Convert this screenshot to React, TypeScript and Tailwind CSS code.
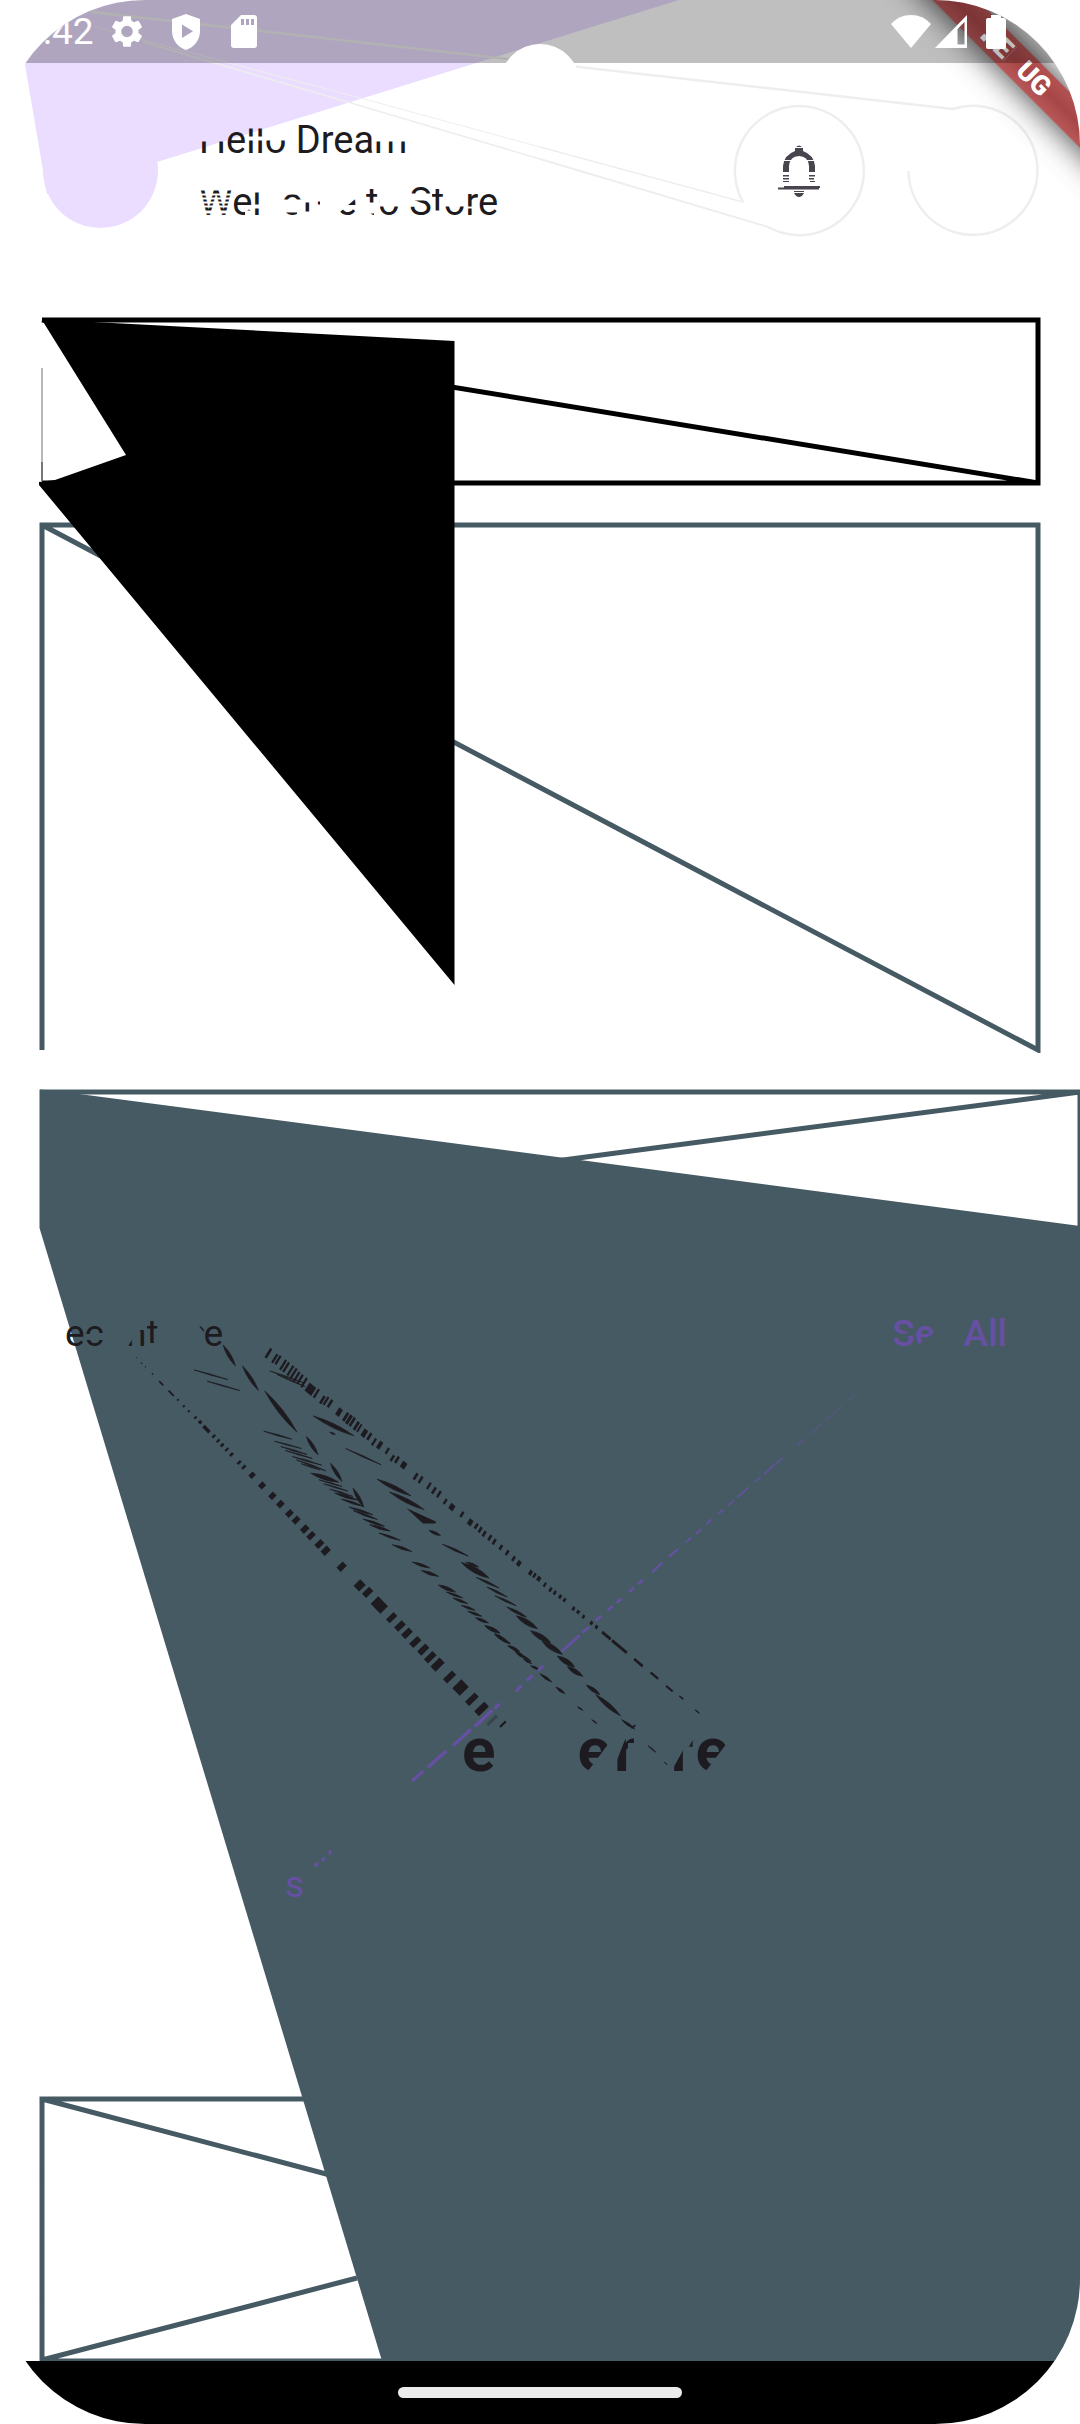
type Streak = [number, number, number, number, number];
type Tick = [number, number, number, number];

const SLATE = "#465a64";
const INK = "#1d1b20";
const VIOLET = "#6750a4";

/* centre x, centre y, length along the chain, width across it */
const lowerChain: Tick[] = [
  [350, 233, 4, 2], [365, 250, 5, 3], [377, 261, 4, 3], [398, 282, 5, 4], [424, 310, 18, 5], [454, 340, 22, 6],
  [474, 360, 5, 7], [492, 379, 6, 7], [507, 394, 6, 7], [527, 413, 6, 10], [541, 427, 10, 10], [560, 448, 26, 11],
  [582, 469, 7, 12], [595, 483, 7, 12], [607, 496, 8, 12], [621, 509, 7, 13], [635, 524, 8, 13], [658, 548, 8, 14],
  [672, 562, 8, 15], [697, 586, 14, 18], [727, 617, 16, 19], [758, 648, 16, 20], [782, 673, 17, 21], [809, 701, 16, 22],
  [829, 721, 16, 23], [855, 748, 17, 24], [874, 768, 16, 25], [899, 793, 17, 26], [918, 813, 18, 26], [966, 861, 18, 26],
  [1020, 917, 24, 28], [1044, 938, 18, 30], [1079, 976, 42, 32], [1116, 1014, 16, 32], [1141, 1039, 18, 32],
  [1162, 1061, 18, 32], [1187, 1087, 18, 34], [1211, 1110, 18, 34], [1232, 1133, 18, 36], [1254, 1155, 22, 38],
  [1290, 1192, 18, 38], [1323, 1224, 32, 38], [1357, 1259, 18, 40], [1386, 1288, 20, 42], [1450, 1334, 7, 24],
];

const upperChain: Tick[] = [
  [746, 220, 8, 32], [765, 236, 7, 30], [775, 240, 7, 30], [790, 255, 7, 34], [799, 262, 7, 34], [812, 272, 7, 34],
  [822, 280, 7, 34], [831, 290, 7, 32], [841, 298, 7, 32], [853, 308, 7, 32], [872, 328, 26, 28], [890, 341, 7, 30],
  [908, 360, 8, 26], [919, 363, 7, 28], [931, 371, 8, 26], [958, 397, 14, 24], [978, 411, 9, 28], [988, 419, 10, 30],
  [998, 426, 8, 30], [1010, 438, 9, 28], [1019, 445, 6, 26], [1034, 460, 14, 24], [1049, 470, 8, 24], [1063, 486, 7, 24],
  [1080, 496, 12, 24], [1103, 513, 7, 20], [1118, 535, 8, 20], [1132, 540, 8, 22], [1152, 556, 16, 20], [1188, 590, 8, 22],
  [1203, 600, 8, 22], [1228, 618, 7, 22], [1243, 632, 8, 22], [1258, 643, 8, 22], [1277, 665, 7, 18], [1297, 682, 16, 18],
  [1327, 704, 8, 18], [1352, 728, 14, 18], [1370, 739, 8, 18], [1382, 750, 8, 18], [1394, 762, 8, 18], [1411, 774, 8, 18],
  [1424, 786, 8, 18], [1444, 803, 8, 16], [1463, 819, 8, 16], [1482, 837, 8, 16], [1498, 851, 12, 16],
  [1533, 879, 10, 15], [1545, 887, 8, 15], [1558, 897, 12, 14], [1576, 915, 7, 14], [1593, 930, 8, 14], [1606, 939, 8, 13],
  [1622, 951, 9, 12], [1635, 961, 8, 12], [1662, 987, 8, 12], [1676, 997, 9, 11], [1692, 1011, 8, 11],
  [1716, 1030, 9, 10], [1731, 1042, 9, 10], [1761, 1068, 34, 9], [1800, 1101, 58, 9], [1857, 1149, 34, 8],
  [1905, 1188, 30, 7], [1950, 1227, 26, 6], [1986, 1254, 16, 5], [2034, 1296, 16, 4],
];

/* x1, y1, x2, y2, thickness */
const fineStreaks: Streak[] = [
  [610, 195, 647, 258, 10], [668, 258, 716, 332, 10], [735, 333, 832, 457, 14], [860, 470, 895, 525, 10],
  [932, 550, 967, 605, 10], [1000, 625, 1032, 682, 10], [540, 138, 553, 154, 4],
  [523, 270, 624, 299, 3], [562, 304, 660, 332, 3], [732, 454, 816, 478, 4], [764, 484, 845, 506, 3],
  [783, 500, 862, 524, 4], [797, 512, 878, 536, 3], [818, 530, 906, 556, 4], [830, 540, 918, 573, 4],
  [845, 552, 900, 570, 3], [873, 580, 957, 607, 12], [898, 600, 967, 620, 3], [912, 612, 985, 634, 3],
  [930, 628, 1000, 650, 4], [945, 640, 1014, 661, 8], [965, 658, 1032, 680, 6], [988, 682, 1060, 705, 6],
  [1000, 692, 1073, 719, 6], [1030, 718, 1095, 740, 7], [1050, 735, 1112, 754, 8], [1078, 760, 1142, 782, 6],
  [1118, 795, 1176, 815, 8], [1178, 847, 1231, 865, 8], [1205, 872, 1257, 890, 9], [1256, 916, 1308, 937, 10],
  [1280, 937, 1330, 955, 6], [1300, 955, 1345, 972, 7], [1325, 977, 1367, 992, 7], [1345, 995, 1387, 1010, 7],
  [1368, 1014, 1407, 1030, 8], [1396, 1038, 1440, 1060, 8], [1425, 1062, 1455, 1078, 6], [1440, 1076, 1472, 1092, 6],
  [1465, 1098, 1500, 1115, 6], [1483, 1112, 1510, 1127, 6], [1503, 1125, 1535, 1145, 6],
  [750, 273, 850, 308, 3], [772, 284, 856, 320, 3], [880, 408, 1003, 468, 12], [930, 457, 947, 464, 5],
  [978, 506, 1085, 555, 4], [1072, 598, 1174, 648, 12], [1110, 637, 1214, 690, 12], [1228, 752, 1263, 767, 8],
  [1268, 793, 1346, 829, 6], [1340, 847, 1378, 862, 7], [1325, 848, 1409, 895, 16], [1370, 893, 1439, 925, 6],
  [1402, 922, 1463, 952, 6], [1426, 948, 1490, 978, 6],
];

const farStreaks: Streak[] = [
  [208, 738, 245, 760, 10], [232, 764, 270, 792, 8], [265, 798, 292, 814, 7], [285, 820, 308, 835, 7],
  [302, 837, 323, 852, 6], [320, 858, 342, 870, 6], [343, 882, 372, 907, 7], [382, 922, 404, 942, 7],
  [435, 981, 448, 992, 4], [470, 1020, 483, 1032, 3], [262, 682, 310, 712, 8], [285, 708, 337, 747, 14],
  [320, 753, 370, 790, 14], [348, 784, 398, 824, 14], [386, 829, 428, 862, 14], [410, 860, 448, 890, 12],
  [457, 916, 490, 945, 10], [480, 945, 540, 1008, 12], [543, 1020, 575, 1048, 7], [568, 1046, 577, 1036, 5],
  [608, 1098, 627, 1118, 3], [648, 1148, 655, 1155, 1],
];

const violetDashes: Streak[] = [
  [1158, 0, 1130, 27, 1], [1113, 45, 1100, 60, 2], [1083, 78, 1043, 123, 2], [1035, 130, 1002, 165, 2],
  [990, 178, 975, 194, 3], [938, 233, 922, 251, 3], [920, 252, 893, 283, 4], [884, 291, 870, 306, 4],
  [854, 322, 828, 352, 4], [817, 362, 805, 377, 4], [792, 389, 780, 403, 5], [764, 418, 751, 434, 5],
  [738, 448, 725, 462, 5], [714, 473, 702, 487, 5], [682, 508, 659, 531, 6], [642, 549, 618, 577, 6],
  [595, 600, 584, 613, 7], [573, 623, 562, 637, 7], [543, 656, 531, 669, 7], [521, 679, 509, 692, 7],
  [494, 708, 480, 722, 7], [463, 742, 447, 759, 7], [440, 767, 396, 815, 7], [351, 858, 339, 873, 8],
  [325, 886, 311, 903, 8], [298, 917, 285, 935, 8], [244, 972, 232, 987, 9], [226, 992, 183, 1041, 9],
  [174, 1049, 130, 1098, 9], [113, 1114, 68, 1164, 9], [57, 1174, 30, 1204, 9],
];

function Ticks({ items, angle, skew }: { items: Tick[]; angle: number; skew: number }) {
  return (
    <g fill={INK}>
      {items.map(([x, y, l, w], i) => (
        <rect key={i} x={-l / 2} y={-w / 2} width={l} height={w} transform={`translate(${x} ${y}) rotate(${angle}) skewX(${skew})`} />
      ))}
    </g>
  );
}

function Lenses({ items }: { items: Streak[] }) {
  return (
    <g fill={INK} stroke={INK} strokeWidth="2">
      {items.map(([x1, y1, x2, y2, t], i) => {
        const len = Math.hypot(x2 - x1, y2 - y1);
        const nx = (-(y2 - y1) / len) * t;
        const ny = ((x2 - x1) / len) * t;
        const mx = (x1 + x2) / 2;
        const my = (y1 + y2) / 2;
        return <path key={i} d={`M${x1} ${y1}Q${mx + nx} ${my + ny} ${x2} ${y2}Q${mx - nx} ${my - ny} ${x1} ${y1}Z`} />;
      })}
    </g>
  );
}

function TextClips() {
  return (
    <svg className="absolute size-0" aria-hidden="true">
      <defs>
        <clipPath id="clip-hello">
          <path d="M0 23H28V45H0ZM28 0H48V45H28ZM48 10H67V18H48ZM48 22H88V45H48ZM88 0H175V45H88ZM175 23H220V45H175Z" />
        </clipPath>
        <clipPath id="clip-welcome">
          <path d="M0 10H34V13H0ZM0 15H34V17H0ZM0 19H34V21H0ZM0 23H34V25H0ZM0 27H34V30H0ZM0 33H34V36H0ZM34 0H54V30H34ZM34 30H46V40H34ZM54 12H63V24H54ZM54 28H63V40H54ZM84 14H104V19H84ZM84 32H98V40H84ZM106 22H111V31H106ZM118 21H121V24H118ZM158 17L138 34V40H158ZM167 8H181V22H167ZM167 33H175V40H167ZM181 26H202V40H181ZM210 5H233V13H210ZM210 20H233V40H210ZM233 8H246V30H233ZM246 26H267V40H246ZM267 10H280V26H267ZM267 28H280V40H267ZM280 10H308V40H280Z" />
        </clipPath>
        <clipPath id="clip-ec">
          <path d="M0 0H20V42H0ZM20 10H41V21H20ZM20 27H41V42H20Z" />
        </clipPath>
        <clipPath id="clip-nt">
          <path d="M0 36L8 24V42H0ZM12 17H21V42H12ZM21 0H35V30H21Z" />
        </clipPath>
        <clipPath id="clip-see">
          <path d="M0 0H23V19L0 22ZM0 26L23 22V42H0ZM23 0H43V19L29 29L24 37H23ZM64 0H124V42H64Z" />
        </clipPath>
        <clipPath id="clip-big-e">
          <path d="M0 10H30V30L9 58L0 52Z" />
        </clipPath>
        <clipPath id="clip-big-r1">
          <path d="M0 72V52L3 45L13 20H20V28H14V72Z" />
        </clipPath>
        <clipPath id="clip-big-r2">
          <path d="M2 54L13 34V72H2ZM18 32L24 22V33H18Z" />
        </clipPath>
        <clipPath id="clip-debug">
          <path d="M0 19H7V32H0ZM18 0H34V32H18ZM51 0H100V32H51Z" />
        </clipPath>
      </defs>
    </svg>
  );
}

function StatusBar() {
  return (
    <div className="relative flex h-[63px] items-center justify-between bg-black/25 pr-[74px] pl-[43px] text-white">
      <div className="flex items-center">
        <span className="w-[50px] text-[37px] leading-[42px] whitespace-nowrap">:42</span>
        <svg className="ml-[18px] h-[33px] w-8" viewBox="2 2 20 20" fill="currentColor" aria-label="Settings">
          <path d="M19.14 12.94c.04-.3.06-.61.06-.94 0-.32-.02-.64-.07-.94l2.03-1.58a.49.49 0 0 0 .12-.61l-1.92-3.32a.49.49 0 0 0-.59-.22l-2.39.96c-.5-.38-1.03-.7-1.62-.94L14.4 2.81a.48.48 0 0 0-.48-.41h-3.84a.47.47 0 0 0-.47.41L9.25 5.35c-.59.24-1.13.57-1.62.94l-2.39-.96a.48.48 0 0 0-.59.22L2.74 8.87a.47.47 0 0 0 .12.61l2.03 1.58c-.05.3-.09.63-.09.94s.02.64.07.94l-2.03 1.58a.49.49 0 0 0-.12.61l1.92 3.32c.12.22.37.29.59.22l2.39-.96c.5.38 1.03.7 1.62.94l.36 2.54c.05.24.24.41.48.41h3.84c.24 0 .44-.17.47-.41l.36-2.54c.59-.24 1.13-.56 1.62-.94l2.39.96c.22.08.47 0 .59-.22l1.92-3.32a.47.47 0 0 0-.12-.61zM12 15.6a3.6 3.6 0 1 1 0-7.2 3.6 3.6 0 0 1 0 7.2z" />
        </svg>
        <svg className="ml-7 h-9 w-[30px]" viewBox="0 0 30 36" aria-label="Protected">
          <path fill="currentColor" fillRule="evenodd" d="M15 0L29 5V17C29 26 23 33.500 15 36C7 33.500 1 26 1 17V5ZM11 10.500V24L22 17.200Z" />
        </svg>
        <svg className="ml-[30px] h-[33px] w-[26px]" viewBox="0 0 26 33" aria-label="Storage card">
          <path fill="currentColor" fillRule="evenodd" d="M10 0H23Q26 0 26 3V30Q26 33 23 33H3Q0 33 0 30V10ZM10 4V10H13V4ZM15 4V10H18V4ZM20 4V10H23V4Z" />
        </svg>
      </div>
      <div className="flex items-center">
        <svg className="h-[33px] w-10" viewBox="0 0 40 33" fill="currentColor" aria-label="Wi-Fi">
          <path d="M0 9Q8 0 20 0T40 9L20 33Z" />
        </svg>
        <svg className="ml-1 h-[33px] w-8" viewBox="0 0 32 33" aria-label="Signal">
          <path fill="currentColor" fillRule="evenodd" d="M32 0V33H0ZM29.500 7L22.500 14V29.500H29.500Z" />
        </svg>
        <svg className="ml-[19px] h-[34px] w-5" viewBox="0 0 20 34" fill="currentColor" aria-label="Battery">
          <path d="M5 0H15V3H18Q20 3 20 5V32Q20 34 18 34H2Q0 34 0 32V5Q0 3 2 3H5Z" />
        </svg>
      </div>
    </div>
  );
}

function HeaderBackdrop() {
  return (
    <svg className="absolute inset-x-0 top-0 h-[240px] w-full" viewBox="0 0 1080 240" preserveAspectRatio="none" aria-hidden="true">
      <g fill="#eaddff">
        <path d="M14 0H679L157 162L100 180L47 194Z" />
        <circle cx="100.500" cy="170.500" r="57.500" />
      </g>
      <g fill="none" stroke="#eeeeee">
        <path strokeWidth="2.500" d="M91 12L953 109A64.500 64.500 0 1 1 908.500 171" />
        <path strokeWidth="2.500" d="M743 202A64.500 64.500 0 1 1 768 227" />
        <path strokeWidth="1" d="M95 27L364 99L540 147" />
        <path strokeWidth="1.500" d="M540 147L743 202" />
        <path strokeWidth="1.500" d="M143 42L351 103L540 159" />
        <path strokeWidth="2" d="M540 159L768 227" />
      </g>
    </svg>
  );
}

function DebugRibbon() {
  return (
    <div className="absolute top-0 right-0 size-[220px] overflow-hidden">
      <div className="absolute top-[45px] left-[6px] flex h-8 w-[300px] rotate-45 items-center justify-center bg-linear-to-b from-[#b45252] via-[#a64646] to-[#b85858] text-[27px] leading-8 font-black text-white shadow-[0_0_32px_rgba(0,0,0,0.8)]">
        <span className="[clip-path:url(#clip-debug)]">DEBUG</span>
      </div>
    </div>
  );
}

function BellIcon() {
  return (
    <svg className="h-[52px] w-[42px]" viewBox="0 0 42 52" fill="#49454f" aria-hidden="true">
      <path d="M18 2Q21 -1 24 2H18ZM17 3H25V6Q36 10 37 21V27H31V21Q30 11 21 11T11 21V27H5V21Q6 10 17 6Z" />
      <path d="M5 30H11V31.500H5ZM31 30H37V31.500H31ZM5 33H11V34.500H5ZM31 33H36V34.500H31ZM5 36H11V37H5ZM32 36H37V37H32ZM6 41H42V43H41V44.500H0V42.500H6ZM16 46H26V47H16ZM16 48H26Q24 52 21 52T16 48Z" />
      <path fill="#ffffff" d="M4 15H13V16H4ZM29 15H38V16H29Z" />
    </svg>
  );
}

function Header() {
  return (
    <header className="relative flex items-center pt-[44px] pr-[43px] pl-[42px]">
      <div className="w-[116px]" />
      <div className="ml-[41px] flex flex-1 flex-col gap-[19px] text-[38px] leading-[43px] whitespace-nowrap text-[#1d1b20]">
        <h1 className="[clip-path:url(#clip-hello)]">Hello Dream</h1>
        <p className="[clip-path:url(#clip-welcome)]">Welcome to Store</p>
      </div>
      <button type="button" aria-label="Notifications" className="flex size-32 items-center justify-center rounded-full">
        <BellIcon />
      </button>
      <button type="button" aria-label="Profile" className="ml-[46px] size-32 rounded-full" />
    </header>
  );
}

function Placeholders() {
  return (
    <section className="relative mt-[82px] flex flex-col gap-9">
      <svg className="h-[169px] w-full" viewBox="0 0 1080 169" preserveAspectRatio="none" fill="none" aria-hidden="true">
        <path stroke="#000000" strokeWidth="5" d="M42 3H1038V166H42M42 3L1038 166" />
        <path stroke="#b8b8b8" strokeWidth="2" d="M42 51V146" />
        <path stroke="#777777" strokeWidth="2" d="M42 145V164" />
      </svg>
      <svg className="h-[531px] w-full" viewBox="0 0 1080 531" preserveAspectRatio="none" fill="none" aria-hidden="true">
        <path stroke={SLATE} strokeWidth="5" d="M42 528V3H1038V528L42 3" />
      </svg>
      <svg className="absolute inset-0 h-full w-full" viewBox="0 0 1080 736" preserveAspectRatio="none" aria-hidden="true">
        <path d="M42 1H93V5L454.500 24V668L39 168V165L55 163L126 138L42 3Z" />
      </svg>
    </section>
  );
}

function Shards() {
  return (
    <svg className="absolute inset-0 h-full w-full" viewBox="0 1089 1080 1272" preserveAspectRatio="none" aria-hidden="true">
      <g fill="none" stroke={SLATE} strokeWidth="5">
        <path d="M40 1092H1080M1080 1092L548 1162M1080 1092V1230" />
        <path d="M357 2278L42 2360V2099H320M42 2099L330 2175M42 2361H382" />
      </g>
      <path fill={SLATE} d="M39.500 1089.500L64 1092L1080 1226V2361H382L39.500 1228Z" />
      <g transform="translate(20 1280) scale(0.333)">
        <Ticks items={lowerChain} angle={46} skew={0} />
        <rect x="-5" y="-20" width="10" height="40" fill="#37474f" transform="translate(1418 1322) rotate(46)" />
        <Ticks items={upperChain} angle={40} skew={8} />
        <Lenses items={fineStreaks} />
        <path fill={INK} d="M1160 685L1250 726L1247 731H1210Z" />
      </g>
      <g transform="translate(400 1380) scale(0.408 0.333)">
        <Lenses items={farStreaks} />
        <g stroke={VIOLET}>
          {violetDashes.map(([x1, y1, x2, y2, w], i) => (
            <line key={i} x1={x1} y1={y1} x2={x2} y2={y2} strokeWidth={w} />
          ))}
        </g>
      </g>
      <path fill={VIOLET} d="M314 1864L317 1862L319 1864L317 1867L315 1867ZM321 1860L324 1856L325 1860L322 1862ZM328 1851L331 1850L332 1853L330 1856Z" />
    </svg>
  );
}

function RecentSection() {
  return (
    <section className="relative mt-9 flex flex-1 flex-col pt-[224px]">
      <Shards />
      <div className="relative flex justify-between pr-[73px] pl-[65px] text-[37px] leading-[42px]">
        <h2 className="flex text-[#1d1b20]">
          <span className="[clip-path:url(#clip-ec)]">ec</span>
          <span className="ml-[22px] [clip-path:url(#clip-nt)]">nt</span>
          <span className="ml-[45px]">e</span>
        </h2>
        <button type="button" className="font-medium text-[#6750a4] [clip-path:url(#clip-see)]">See All</button>
      </div>
      <div className="relative mt-[360px] flex pl-[462px] text-[62px] leading-[70px] font-bold text-[#1d1b20]">
        <span>e</span>
        <span className="ml-[82px] [clip-path:url(#clip-big-e)]">e</span>
        <span className="ml-[3px] [clip-path:url(#clip-big-r1)]">r</span>
        <span className="ml-[34px] [clip-path:url(#clip-big-r2)]">r</span>
        <span className="ml-[2px] [clip-path:url(#clip-big-e)]">e</span>
      </div>
      <p className="relative mt-[79px] pl-[285px] text-[37px] leading-[42px] text-[#6750a4]">s</p>
    </section>
  );
}

export default function App() {
  return (
    <div className="bg-white">
      <TextClips />
      <main className="relative flex min-h-screen flex-col overflow-hidden rounded-[145px] bg-white font-[Roboto,sans-serif]">
        <HeaderBackdrop />
        <DebugRibbon />
        <StatusBar />
        <div className="absolute top-11 left-1/2 size-20 -translate-x-1/2 rounded-full bg-white" />
        <Header />
        <Placeholders />
        <RecentSection />
        <nav className="relative flex h-[63px] items-center justify-center bg-black">
          <button type="button" aria-label="Home" className="h-[11px] w-[284px] rounded-full bg-[#ebebeb]" />
        </nav>
      </main>
    </div>
  );
}
